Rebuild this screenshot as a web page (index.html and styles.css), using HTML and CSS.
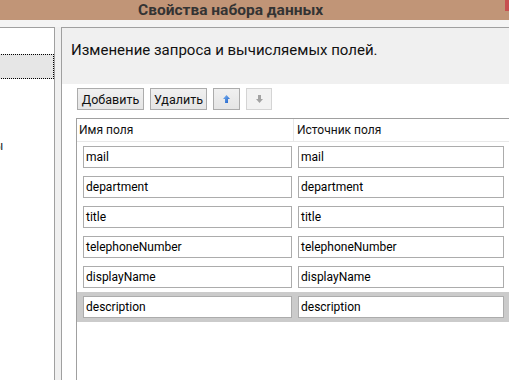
FILE: index.html
```html
<!DOCTYPE html>
<html lang="ru">
<head>
<meta charset="utf-8">
<title>Свойства набора данных</title>
<link rel="stylesheet" href="styles.css">
</head>
<body>
<div class="window">
  <div class="titlebar">
    <span class="title">Свойства набора данных</span>
    <span class="close"></span>
  </div>
  <div class="strip"></div>
  <div class="main">
    <nav class="nav">
      <div class="nav-item nav-item--selected">Поля</div>
      <div class="nav-item nav-item--cut">Параметры</div>
    </nav>
    <section class="page">
      <header class="page-header">Изменение запроса и вычисляемых полей.</header>
      <div class="page-body">
        <div class="toolbar">
          <button class="btn btn--add" type="button">Добавить</button>
          <button class="btn btn--del" type="button">Удалить</button>
          <button class="btn btn--icon" type="button" title="Вверх">
            <svg class="arrow" width="7" height="8" viewBox="0 0 7 8"><defs><linearGradient id="gu" x1="0" y1="0" x2="1" y2="1"><stop offset="0" stop-color="#7fb6f2"/><stop offset="1" stop-color="#1b5ec9"/></linearGradient></defs><path d="M3.5 0 L7 4 H5 V8 H2 V4 H0 Z" fill="url(#gu)"/></svg>
          </button>
          <button class="btn btn--icon btn--disabled" type="button" title="Вниз">
            <svg class="arrow" width="7" height="8" viewBox="0 0 7 8"><path d="M2 0 H5 V4 H7 L3.5 8 L0 4 H2 Z" fill="#a3a3a3"/></svg>
          </button>
        </div>
        <div class="grid">
          <div class="grid-head">
            <div class="hcell hcell--name">Имя поля</div>
            <div class="hcell hcell--src">Источник поля</div>
          </div>
          <div class="grid-row"><div class="field field--name">mail</div><div class="field field--src">mail</div></div>
          <div class="grid-row"><div class="field field--name">department</div><div class="field field--src">department</div></div>
          <div class="grid-row"><div class="field field--name">title</div><div class="field field--src">title</div></div>
          <div class="grid-row"><div class="field field--name">telephoneNumber</div><div class="field field--src">telephoneNumber</div></div>
          <div class="grid-row"><div class="field field--name">displayName</div><div class="field field--src">displayName</div></div>
          <div class="grid-row grid-row--selected"><div class="field field--name">description</div><div class="field field--src">description</div></div>
        </div>
      </div>
    </section>
  </div>
</div>
</body>
</html>
```
FILE: styles.css
```css
html, body {
  margin: 0;
  padding: 0;
}
body {
  width: 509px;
  height: 380px;
  overflow: hidden;
  background: #f0f0f0;
  font-family: Roboto, "Noto Sans", sans-serif;
  color: #000;
}
.window {
  display: flex;
  flex-direction: column;
  height: 380px;
}
.titlebar {
  position: relative;
  height: 20px;
  background: #c19577;
  display: flex;
  align-items: center;
  padding-left: 138px;
}
.title {
  font-weight: bold;
  font-size: 15.5px;
  line-height: 20px;
  color: #333;
  white-space: nowrap;
}
.close {
  position: absolute;
  top: 0;
  right: 0;
  width: 4px;
  height: 11px;
  background: #c75050;
}
.strip {
  height: 7px;
  background: #f4f4f4;
}
.main {
  flex: 1;
  display: flex;
  min-height: 0;
}
.nav {
  width: 54px;
  flex: none;
  background: #fff;
  border-top: 1px solid #a0a0a0;
  border-right: 1px solid #a0a0a0;
  padding-top: 26px;
  overflow: hidden;
}
.nav-item {
  height: 23px;
  font-size: 12px;
  line-height: 23px;
  white-space: nowrap;
  border: 1px dotted transparent;
}
.nav-item--selected {
  margin-left: -1px;
  background: #e6e6e6;
  border-color: #000;
  color: transparent;
}
.nav-item--cut {
  margin-top: 55px;
  margin-left: -63px;
  color: #222;
}
.page {
  flex: 1;
  margin-left: 6px;
  display: flex;
  flex-direction: column;
  border-top: 1px solid #a0a0a0;
  border-left: 1px solid #a0a0a0;
  background: #fff;
  min-width: 0;
}
.page-header {
  box-sizing: border-box;
  height: 56px;
  padding: 12px 0 0 9px;
  background: #f0f0f0;
  font-size: 15px;
  line-height: 20px;
  white-space: nowrap;
  color: #111;
}
.page-body {
  flex: 1;
  display: flex;
  flex-direction: column;
  padding: 4px 0 0 14px;
  min-height: 0;
}
.toolbar {
  display: flex;
  gap: 6px;
  margin-left: 1px;
}
.btn {
  box-sizing: border-box;
  height: 22px;
  margin: 0;
  padding: 0;
  border: 1px solid #acacac;
  background: linear-gradient(#f0f0f0, #e5e5e5);
  font-family: inherit;
  font-size: 12.5px;
  color: #111;
  display: flex;
  align-items: center;
  justify-content: center;
}
.btn--add { width: 67px; }
.btn--del { width: 57px; }
.btn--icon { width: 27px; }
.btn--disabled {
  width: 26px;
  border-color: #d4d4d4;
  background: #f2f2f2;
}
.arrow { display: block; }
.grid {
  flex: 1;
  margin-top: 8px;
  width: 460px;
  border-top: 1px solid #a0a0a0;
  border-left: 1px solid #a0a0a0;
  background: #fff;
}
.grid-head {
  display: flex;
  height: 22px;
  border-bottom: 1px solid #e8e8e8;
  font-size: 12px;
}
.hcell {
  display: flex;
  align-items: center;
  color: #111;
}
.hcell--name {
  width: 214px;
  padding-left: 2px;
  border-right: 1px solid #e8e8e8;
}
.hcell--src {
  padding-left: 3px;
}
.grid-row {
  display: flex;
  align-items: center;
  height: 30px;
  padding-left: 6px;
  gap: 6px;
}
.grid-row--selected {
  background: #cbcbcb;
}
.field {
  box-sizing: border-box;
  height: 22px;
  border: 1px solid #acacac;
  background: #fff;
  padding-left: 2px;
  font-size: 12px;
  line-height: 20px;
  white-space: nowrap;
  color: #000;
}
.field--name { width: 209px; }
.field--src { width: 206px; }
```
